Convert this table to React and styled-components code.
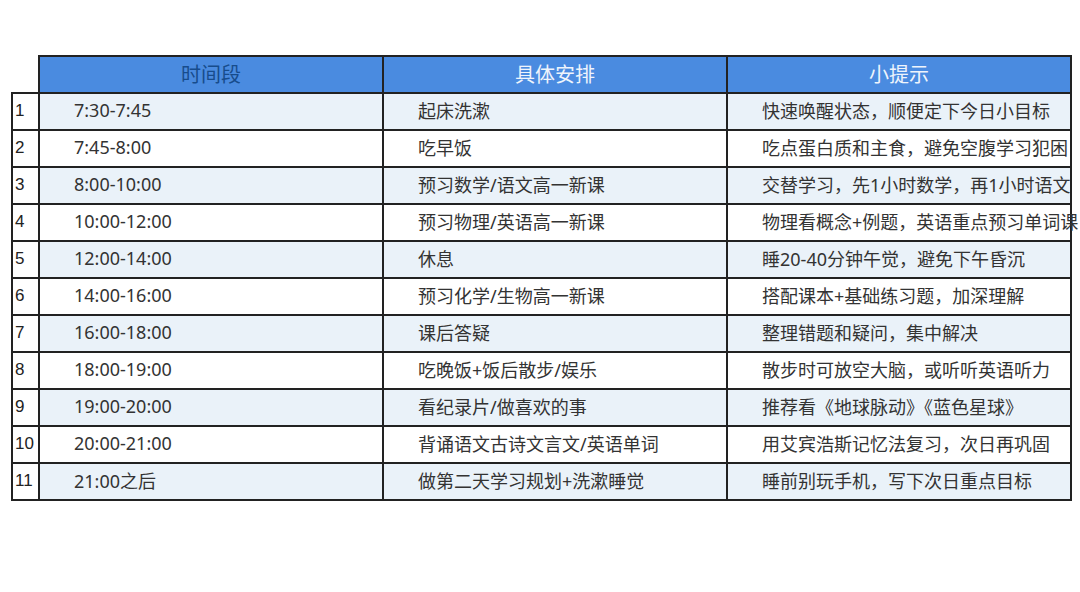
import React from 'react';
import styled, { createGlobalStyle } from 'styled-components';

const GlobalStyle = createGlobalStyle`
  html, body {
    margin: 0;
    padding: 0;
    background: #ffffff;
  }
  body {
    font-family: "Noto Sans", "Noto Sans CJK SC", sans-serif;
    overflow: hidden;
  }
`;

const Page = styled.div`
  width: 1080px;
  height: 592px;
  padding: 55px 0 0 11px;
  box-sizing: border-box;
`;

const Table = styled.table`
  width: 1059px;
  border-collapse: collapse;
  table-layout: fixed;
  color: #333333;
`;

const HeadCell = styled.th`
  height: 33px;
  padding: 0 0 2px;
  background: #4a8be0;
  border: 2px solid #222222;
  font-family: "Noto Sans CJK SC", sans-serif;
  font-weight: normal;
  font-size: 20px;
  text-align: center;
  color: ${p => (p.$dark ? '#174c8c' : '#eef4fc')};
`;

const CornerCell = styled.th`
  padding: 0;
  border: none;
  border-bottom: 2px solid #222222;
  background: #ffffff;
`;

const NumCell = styled.td`
  height: 33px;
  padding: 0 0 2px 2px;
  border: 2px solid #222222;
  background: #ffffff;
  font-family: "Liberation Sans", sans-serif;
  font-size: 17px;
  color: #222222;
  white-space: nowrap;
`;

const Cell = styled.td`
  height: 32px;
  padding: 0 0 3px 34px;
  border: 2px solid #222222;
  background: ${p => (p.$shade ? '#eaf2f9' : '#ffffff')};
  font-size: 18px;
  white-space: nowrap;
  overflow: visible;
`;

const rows = [
  ['7:30-7:45', '起床洗漱', '快速唤醒状态，顺便定下今日小目标'],
  ['7:45-8:00', '吃早饭', '吃点蛋白质和主食，避免空腹学习犯困'],
  ['8:00-10:00', '预习数学/语文高一新课', '交替学习，先1小时数学，再1小时语文'],
  ['10:00-12:00', '预习物理/英语高一新课', '物理看概念+例题，英语重点预习单词课'],
  ['12:00-14:00', '休息', '睡20-40分钟午觉，避免下午昏沉'],
  ['14:00-16:00', '预习化学/生物高一新课', '搭配课本+基础练习题，加深理解'],
  ['16:00-18:00', '课后答疑', '整理错题和疑问，集中解决'],
  ['18:00-19:00', '吃晚饭+饭后散步/娱乐', '散步时可放空大脑，或听听英语听力'],
  ['19:00-20:00', '看纪录片/做喜欢的事', '推荐看《地球脉动》《蓝色星球》'],
  ['20:00-21:00', '背诵语文古诗文言文/英语单词', '用艾宾浩斯记忆法复习，次日再巩固'],
  ['21:00之后', '做第二天学习规划+洗漱睡觉', '睡前别玩手机，写下次日重点目标'],
];

export default function App() {
  return (
    <Page>
      <GlobalStyle />
      <Table>
        <colgroup>
          <col style={{ width: 27 }} />
          <col style={{ width: 344 }} />
          <col style={{ width: 344 }} />
          <col style={{ width: 344 }} />
        </colgroup>
        <thead>
          <tr>
            <CornerCell />
            <HeadCell $dark>时间段</HeadCell>
            <HeadCell>具体安排</HeadCell>
            <HeadCell>小提示</HeadCell>
          </tr>
        </thead>
        <tbody>
          {rows.map((r, i) => (
            <tr key={i}>
              <NumCell>{i + 1}</NumCell>
              <Cell $shade={i % 2 === 0}>{r[0]}</Cell>
              <Cell $shade={i % 2 === 0}>{r[1]}</Cell>
              <Cell $shade={i % 2 === 0}>{r[2]}</Cell>
            </tr>
          ))}
        </tbody>
      </Table>
    </Page>
  );
}
